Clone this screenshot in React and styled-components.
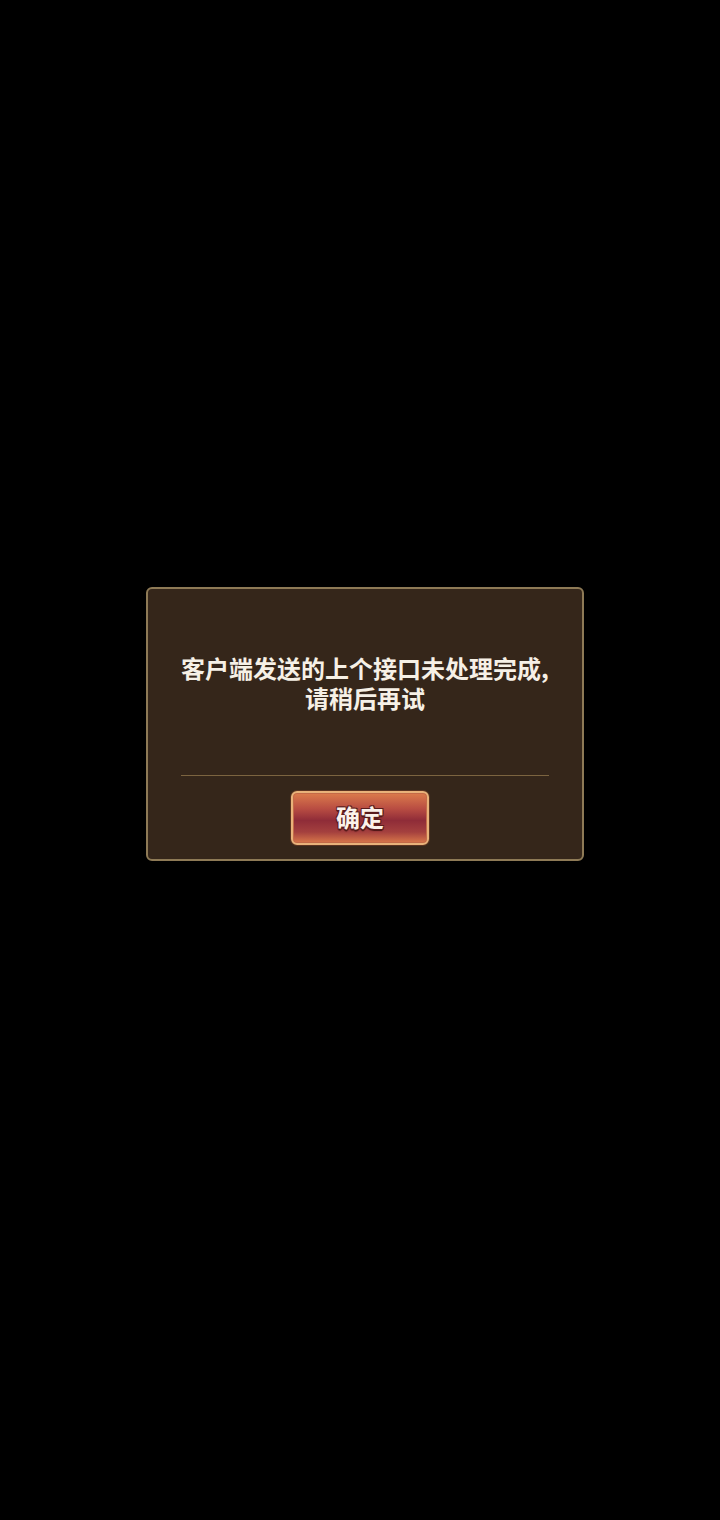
import React from 'react';
import styled, { createGlobalStyle } from 'styled-components';

const GlobalStyle = createGlobalStyle`
  html, body {
    margin: 0;
    padding: 0;
    background: #000;
  }
  body {
    font-family: "Noto Sans CJK SC", "Noto Sans", sans-serif;
  }
`;

const Screen = styled.div`
  width: 720px;
  height: 1520px;
  background: #000;
  display: flex;
  flex-direction: column;
  align-items: flex-start;
  padding-top: 587px;
  box-sizing: border-box;
`;

const Dialog = styled.div`
  margin-left: 146px;
  width: 438px;
  height: 274px;
  box-sizing: border-box;
  background: #35261a;
  border: 2px solid #8e7a56;
  border-radius: 6px;
  display: flex;
  flex-direction: column;
  align-items: center;
  padding: 64px 0 0;
`;

const Message = styled.p`
  margin: 0;
  color: #f6f0e6;
  font-size: 24px;
  font-weight: 700;
  line-height: 30px;
  text-align: center;
  white-space: nowrap;
  height: 122px;
`;

const Divider = styled.div`
  width: 368px;
  height: 1px;
  background: #7c6440;
`;

const ConfirmButton = styled.button`
  margin-top: 15px;
  margin-right: 10px;
  width: 138px;
  height: 54px;
  box-sizing: border-box;
  border: 2px solid #e9b27a;
  border-radius: 6px;
  padding: 0 0 4px;
  background: linear-gradient(
    to bottom,
    #dc7c4c 0%,
    #b84c42 32%,
    #8f2c38 55%,
    #a4403e 78%,
    #d9784a 100%
  );
  box-shadow: 0 0 0 1px #5a3320, inset 0 0 0 1px #c46a48;
  color: #fbf2ea;
  font-family: "Noto Sans CJK SC", sans-serif;
  font-size: 24px;
  font-weight: 700;
  text-shadow: -1px -1px 0 #5a1c1c, 1px -1px 0 #5a1c1c, -1px 1px 0 #5a1c1c,
    1px 1px 0 #5a1c1c, 0 2px 1px #4a1414;
  cursor: pointer;
`;

export default function App() {
  return (
    <Screen>
      <GlobalStyle />
      <Dialog>
        <Message>
          客户端发送的上个接口未处理完成,
          <br />
          请稍后再试
        </Message>
        <Divider />
        <ConfirmButton>确定</ConfirmButton>
      </Dialog>
    </Screen>
  );
}
